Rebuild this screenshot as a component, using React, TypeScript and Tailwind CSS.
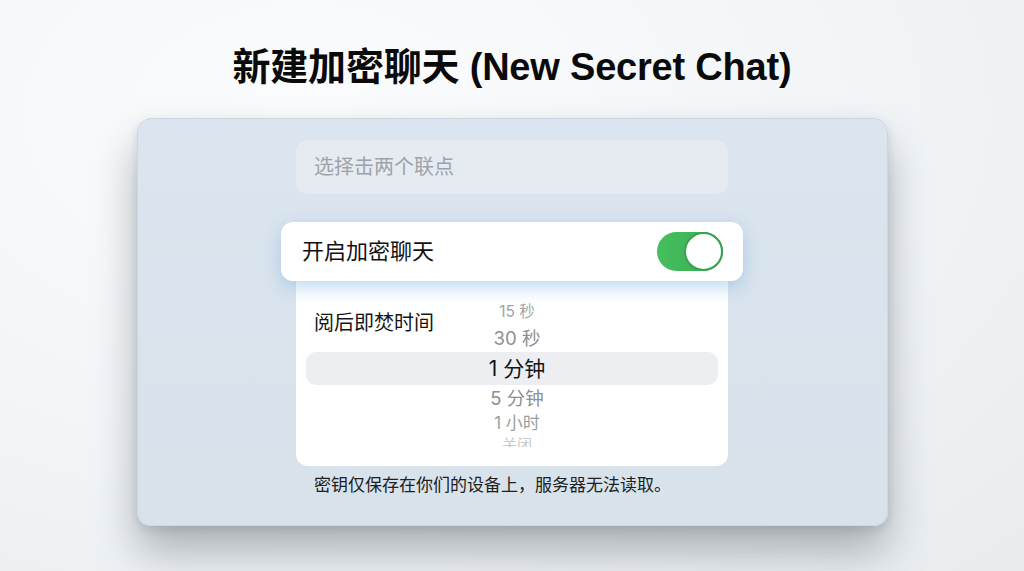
import React from "react";

const cjk = "font-['Inter','Noto_Sans_CJK_SC',sans-serif]";

type WheelRow = { label: string; h: string; size: string; color: string; selected?: boolean };

const rows: WheelRow[] = [
  { label: "15 秒", h: "h-[24px]", size: "text-[15.5px]", color: "text-[#a3a5a8]" },
  { label: "30 秒", h: "h-[28px]", size: "text-[18.5px]", color: "text-[#8d8f92]" },
  { label: "1 分钟", h: "h-[33px]", size: "text-[21px]", color: "text-[#141414]", selected: true },
  { label: "5 分钟", h: "h-[26px]", size: "text-[18.5px]", color: "text-[#8d8f92]" },
  { label: "1 小时", h: "h-[24px]", size: "text-[17px]", color: "text-[#9c9ea1]" },
  { label: "关闭", h: "h-[18px]", size: "text-[15px]", color: "text-[#c8cacd]" },
];

function Toggle() {
  return (
    <div className="flex h-[39px] w-[66px] items-center justify-end rounded-full bg-gradient-to-r from-[#46bf5f] to-[#38ad52]">
      <div className="h-[39px] w-[39px] rounded-full border-[2.5px] border-[#35a350] bg-white" />
    </div>
  );
}

export default function App() {
  return (
    <div
      className={`flex h-[571px] w-[1024px] flex-col items-center overflow-hidden bg-[radial-gradient(ellipse_at_30%_20%,#fbfcfd_0%,#f2f5f8_55%,#e8ecef_100%)] ${cjk}`}
    >
      <h1 className="mt-[43px] h-[48px] text-[38px] font-bold leading-[48px] tracking-[-0.2px] text-[#0a0a0a] font-['Liberation_Sans','Noto_Sans_CJK_SC',sans-serif]">
        新建加密聊天 (New Secret Chat)
      </h1>

      <div className="mt-[27px] flex h-[408px] w-[751px] flex-col items-center rounded-[14px] border border-[#cdd7e1] bg-gradient-to-b from-[#dbe5ef] to-[#d8e2eb] pt-[21px] shadow-[0_26px_44px_rgba(50,60,70,0.36),0_4px_10px_rgba(60,70,80,0.14)]">
        {/* contact search */}
        <div className="flex h-[54px] w-[432px] items-center rounded-[12px] bg-[#e5ebf1] pl-[18px]">
          <span className="text-[20px] text-[#9da3a9]">选择击两个联点</span>
        </div>

        {/* secret chat switch */}
        <div className="relative z-10 mt-[28px] flex h-[59px] w-[462px] items-center justify-between rounded-[12px] bg-white pl-[21px] pr-[20px] shadow-[0_6px_18px_rgba(110,170,225,0.45)]">
          <span className="text-[22px] text-[#111]">开启加密聊天</span>
          <Toggle />
        </div>

        {/* self-destruct timer */}
        <div className="grid h-[185px] w-[432px] rounded-b-[12px] bg-white">
          <div className="[grid-area:1/1] pl-[18px] pt-[30px]">
            <span className="text-[20px] leading-[24px] text-[#161616]">阅后即焚时间</span>
          </div>
          <div className="[grid-area:1/1] px-[10px] pt-[19px]">
            <div className="flex h-[147px] flex-col overflow-hidden">
              {rows.map((r) => (
                <div
                  key={r.label}
                  className={`flex shrink-0 items-center justify-center pl-[10px] ${r.h} ${
                    r.selected ? "rounded-[10px] bg-[#eceef2]" : ""
                  }`}
                >
                  <span className={`leading-none ${r.size} ${r.color}`}>{r.label}</span>
                </div>
              ))}
            </div>
          </div>
        </div>

        <div className="mt-[7px] w-[432px] pl-[18px]">
          <span className="text-[17px] leading-[24px] text-[#202020]">
            密钥仅保存在你们的设备上，服务器无法读取。
          </span>
        </div>
      </div>
    </div>
  );
}
